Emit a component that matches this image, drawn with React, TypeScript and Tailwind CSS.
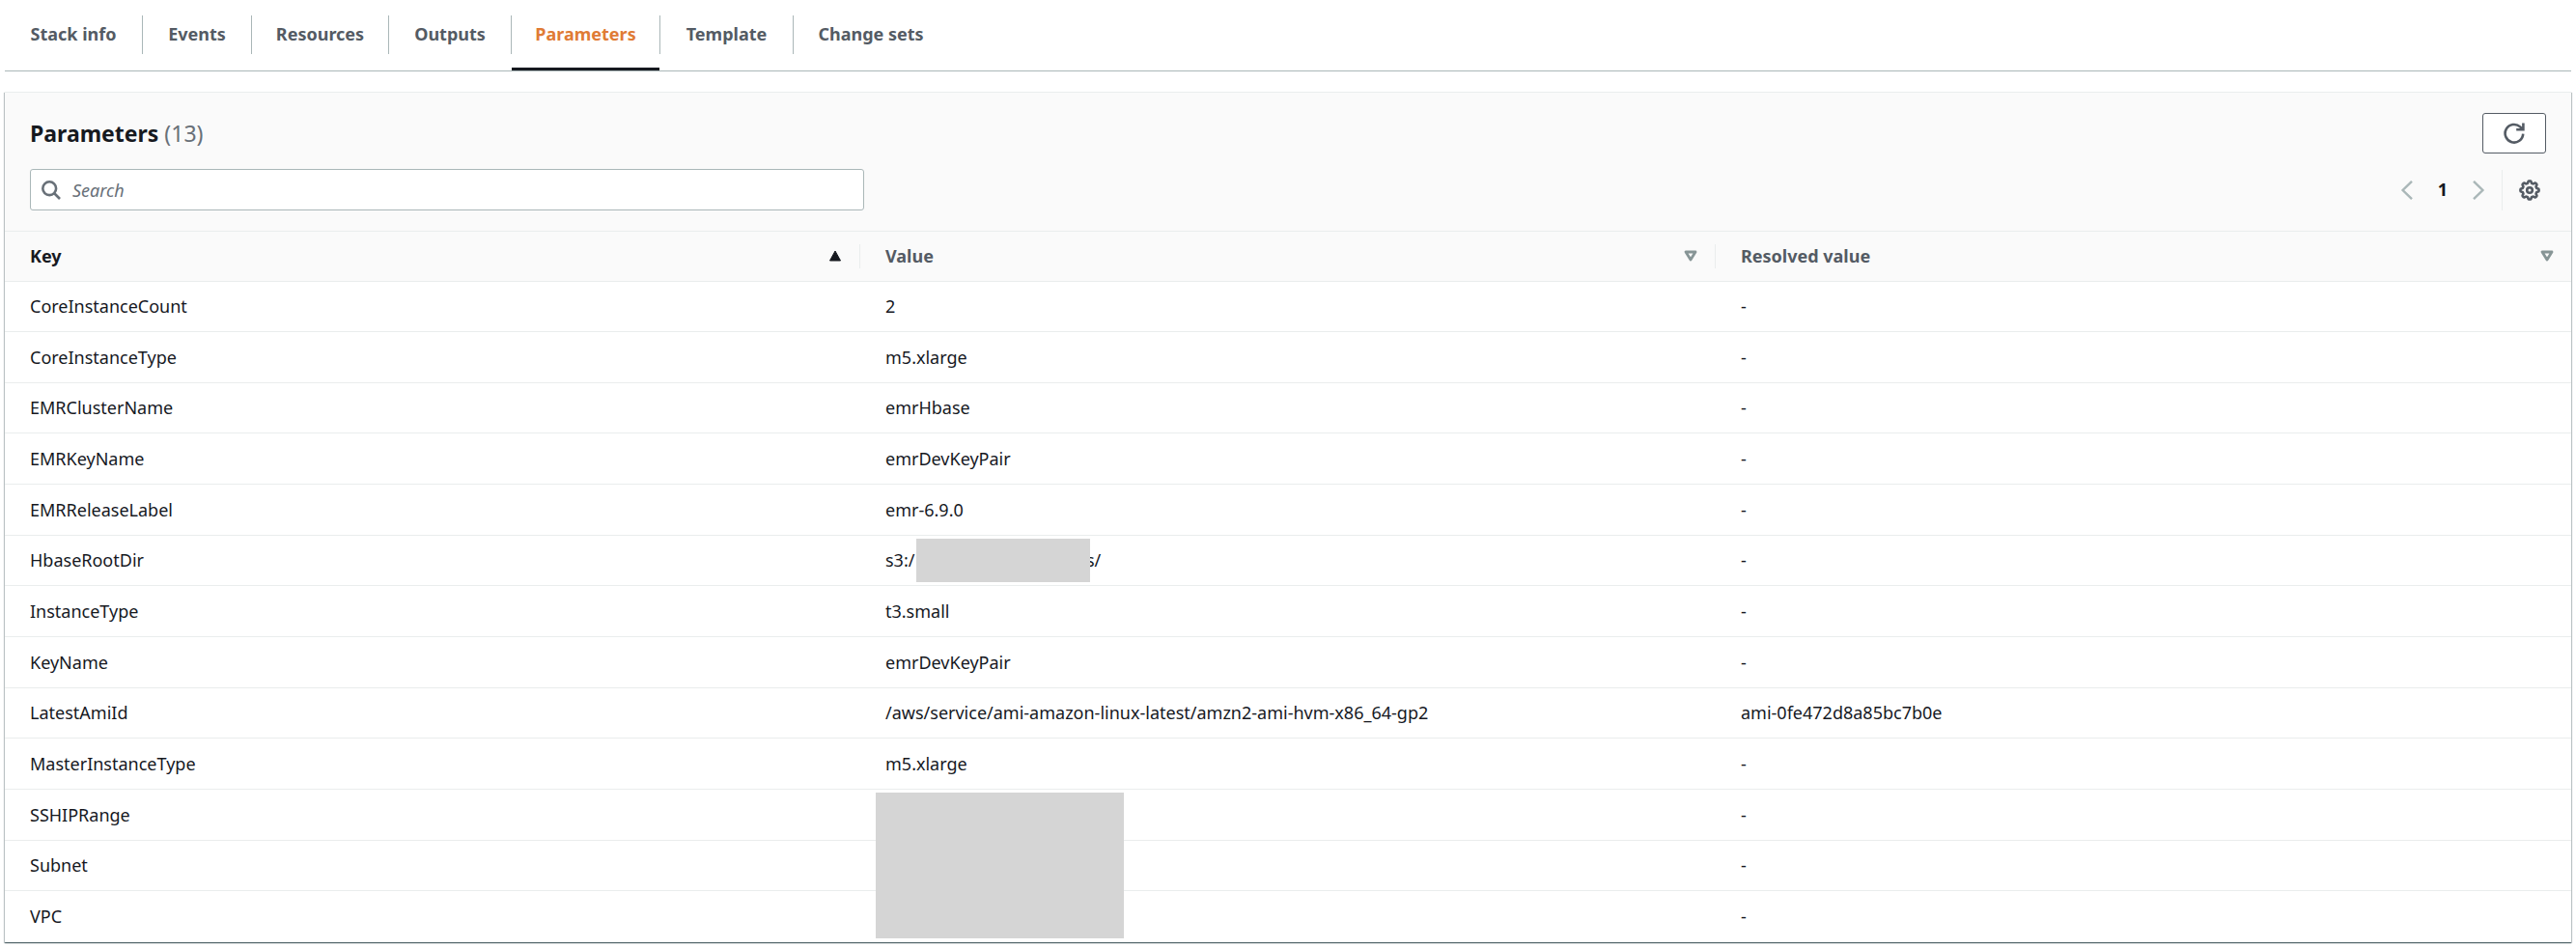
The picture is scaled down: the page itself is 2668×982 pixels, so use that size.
import React from "react";

type Tab = { label: string; width: string };

const tabs: Tab[] = [
  { label: "Stack info", width: "w-[143px]" },
  { label: "Events", width: "w-[113px]" },
  { label: "Resources", width: "w-[142px]" },
  { label: "Outputs", width: "w-[127px]" },
  { label: "Parameters", width: "w-[154px]" },
  { label: "Template", width: "w-[138px]" },
  { label: "Change sets", width: "w-[160px]" },
];

type Row = { key: string; value: React.ReactNode; resolved?: string };

const rows: Row[] = [
  { key: "CoreInstanceCount", value: "2" },
  { key: "CoreInstanceType", value: "m5.xlarge" },
  { key: "EMRClusterName", value: "emrHbase" },
  { key: "EMRKeyName", value: "emrDevKeyPair" },
  { key: "EMRReleaseLabel", value: "emr-6.9.0" },
  {
    key: "HbaseRootDir",
    value: (
      <span className="flex items-center">
        <span className="w-8">s3:/</span>
        <span className="relative z-10 h-[45px] w-[180px] bg-[#d5d5d5]" />
        <span className="-ml-1">s/</span>
      </span>
    ),
  },
  { key: "InstanceType", value: "t3.small" },
  { key: "KeyName", value: "emrDevKeyPair" },
  {
    key: "LatestAmiId",
    value: "/aws/service/ami-amazon-linux-latest/amzn2-ami-hvm-x86_64-gp2",
    resolved: "ami-0fe472d8a85bc7b0e",
  },
  { key: "MasterInstanceType", value: "m5.xlarge" },
  {
    key: "SSHIPRange",
    value: <span className="absolute top-[3px] left-4 z-10 h-[151px] w-[257px] bg-[#d5d5d5]" />,
  },
  { key: "Subnet", value: "" },
  { key: "VPC", value: "" },
];

function SortIcon({ active }: { active?: boolean }) {
  return active ? (
    <svg className="size-[14px] shrink-0" viewBox="0 0 14 14" aria-hidden="true">
      <path d="M7 2 12.5 12h-11z" fill="#16191f" stroke="#16191f" strokeLinejoin="round" />
    </svg>
  ) : (
    <svg className="size-[14px] shrink-0" viewBox="0 0 14 14" aria-hidden="true">
      <path d="M2 3h10L7 11z" fill="none" stroke="#879596" strokeWidth="2.8" strokeLinejoin="round" />
    </svg>
  );
}

function HeaderCell({ label, active, last }: { label: string; active?: boolean; last?: boolean }) {
  return (
    <th scope="col" className="h-[52px] border-b border-[#eaeded] p-0" aria-sort={active ? "ascending" : undefined}>
      <div className={last ? "flex h-[25px]" : "flex h-[25px] border-r border-[#eaeded]"}>
        <button
          type="button"
          className={
            active
              ? "flex flex-1 items-center justify-between pr-[18px] pb-px pl-[26px] font-bold text-[#16191f]"
              : "flex flex-1 items-center justify-between pr-[18px] pb-px pl-[26px] font-bold text-[#545b64]"
          }
        >
          {label}
          <SortIcon active={active} />
        </button>
      </div>
    </th>
  );
}

function gearPath() {
  const points: string[] = [];
  const steps = 96;
  for (let i = 0; i < steps; i++) {
    const a = (i / steps) * Math.PI * 2;
    const r = 8.5 + 1.1 * Math.tanh(2.2 * Math.cos(8 * a));
    points.push(`${(11 + r * Math.sin(a)).toFixed(2)} ${(11 - r * Math.cos(a)).toFixed(2)}`);
  }
  return `M${points.join("L")}Z`;
}

export default function App() {
  return (
    <div className="bg-white px-[5px] pb-1 font-['Noto_Sans',sans-serif] text-[18px] leading-6 text-[#16191f]">
      <nav className="flex h-[74px] border-b border-[#aab7b8]" role="tablist">
        {tabs.map((tab, i) => {
          const active = tab.label === "Parameters";
          return (
            <button
              key={tab.label}
              type="button"
              role="tab"
              aria-selected={active}
              className={`relative flex shrink-0 flex-col pt-4 font-bold whitespace-nowrap ${tab.width} ${
                active ? "text-[#e07b35]" : "text-[#545b64]"
              }`}
            >
              <span
                className={`flex h-10 w-full items-center justify-center pb-0.5 ${
                  i < tabs.length - 1 ? "border-r border-[#aab7b8]" : ""
                }`}
              >
                {tab.label}
              </span>
              {active && <span className="absolute right-px bottom-0 left-0 h-[3px] bg-[#16191f]" />}
            </button>
          );
        })}
      </nav>

      <section className="mt-[21px] border-t border-[#eaeded] bg-white shadow-[0_1px_1px_0_rgba(0,28,36,0.5),1px_1px_1px_0_rgba(0,28,36,0.2),-1px_1px_1px_0_rgba(0,28,36,0.2)]">
        <header className="flex flex-col gap-4 border-b border-[#eaeded] bg-[#fafafa] px-[26px] py-[21px]">
          <div className="flex items-center justify-between">
            <h2 className="pb-px text-[23px] leading-8 font-bold">
              Parameters <span className="font-normal text-[#687078]">(13)</span>
            </h2>
            <button
              type="button"
              aria-label="Refresh"
              className="flex h-[42px] w-[66px] items-center justify-center rounded-[3px] border border-[#545b64] bg-white"
            >
              <svg className="size-[22px]" viewBox="0 0 22 22" fill="none" stroke="#545b64" strokeWidth="2.6" aria-hidden="true">
                <path d="M20.2 11.6A9.3 9.3 0 1 1 17.2 4.4L19.6 6.8M20.4 0.4V7.2H13.2" />
              </svg>
            </button>
          </div>
          <div className="flex items-center justify-between">
            <label className="flex h-[43px] w-full max-w-[864px] items-center gap-3 rounded-[3px] border border-[#aab7b8] bg-white pl-[11px]">
              <svg className="size-5 shrink-0" viewBox="0 0 20 20" fill="none" stroke="#687078" strokeWidth="2.6" aria-hidden="true">
                <circle cx="8.2" cy="8.2" r="6.9" />
                <path d="M13 13 19 19" />
              </svg>
              <input
                type="search"
                aria-label="Search"
                placeholder="Search"
                className="w-full bg-transparent outline-none placeholder:text-[#687078] placeholder:italic"
              />
            </label>
            <div className="flex items-center">
              <button type="button" aria-label="Previous page">
                <svg className="h-5 w-[14px]" viewBox="0 0 14 20" fill="none" stroke="#aab7b8" strokeWidth="2.4" aria-hidden="true">
                  <path d="M12 0.8 2.6 10 12 19.2" />
                </svg>
              </button>
              <button type="button" className="w-[60px] pb-px text-center font-bold">
                1
              </button>
              <button type="button" aria-label="Next page">
                <svg className="h-5 w-[14px]" viewBox="0 0 14 20" fill="none" stroke="#aab7b8" strokeWidth="2.4" aria-hidden="true">
                  <path d="M2 0.8 11.4 10 2 19.2" />
                </svg>
              </button>
              <span className="ml-[17px] h-[42px] w-px bg-[#eaeded]" />
              <button type="button" aria-label="Preferences" className="mr-1.5 ml-[17px]">
                <svg className="size-[22px]" viewBox="0 0 22 22" fill="none" stroke="#545b64" strokeWidth="2.6" aria-hidden="true">
                  <path d={gearPath()} strokeLinejoin="round" />
                  <circle cx="11" cy="11" r="2.8" />
                </svg>
              </button>
            </div>
          </div>
        </header>

        <table className="w-full table-fixed border-separate border-spacing-0 text-left">
          <thead className="bg-[#fafafa]">
            <tr>
              <HeaderCell label="Key" active />
              <HeaderCell label="Value" />
              <HeaderCell label="Resolved value" last />
            </tr>
          </thead>
          <tbody>
            {rows.map((row) => (
              <tr
                key={row.key}
                className="h-[53px] first:h-[52px] [&:not(:last-child)>td]:border-b [&:nth-child(3n)]:h-[52px] [&>td]:border-[#eaeded]"
              >
                <td className="pt-0 pb-px pl-[26px]">{row.key}</td>
                <td className="relative pt-0 pb-px pl-[26px]">{row.value}</td>
                <td className="pt-0 pb-px pl-[26px]">{row.resolved ?? "-"}</td>
              </tr>
            ))}
          </tbody>
        </table>
      </section>
    </div>
  );
}
